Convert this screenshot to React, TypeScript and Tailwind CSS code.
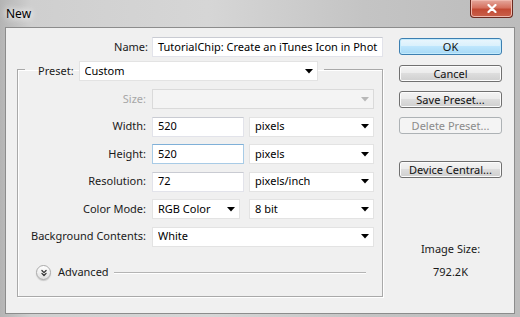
import { ChevronsDown } from "lucide-react";

const font = "font-['Noto_Sans','Open_Sans',sans-serif]";

function Arrow({ disabled }: { disabled?: boolean }) {
  return (
    <svg width="8" height="5" viewBox="0 0 8 5" className="shrink-0">
      <polygon points="0,0 8,0 4,4.5" fill={disabled ? "#b8b8b8" : "#000"} />
    </svg>
  );
}

function Select({
  value,
  width,
  disabled,
}: {
  value?: string;
  width: string;
  disabled?: boolean;
}) {
  return (
    <div
      className={`${width} h-[20px] flex items-center justify-between pl-[5px] pr-[4px] border ${
        disabled
          ? "bg-[#f4f4f4] border-[#dadada]"
          : "bg-white border-[#e3e3e3]"
      }`}
    >
      <span className="truncate">{value}</span>
      <Arrow disabled={disabled} />
    </div>
  );
}

function TextBox({
  value,
  width,
  focused,
}: {
  value: string;
  width: string;
  focused?: boolean;
}) {
  return (
    <div
      className={`${width} h-[20px] flex items-center pl-[5px] bg-white border overflow-hidden whitespace-nowrap ${
        focused
          ? "border-[#a8cbe6] border-t-[#7fb0d8]"
          : "border-[#e2e3ea] border-t-[#c9cbd2]"
      }`}
    >
      {value}
    </div>
  );
}

function Row({
  label,
  children,
  disabled,
}: {
  label: string;
  children: React.ReactNode;
  disabled?: boolean;
}) {
  return (
    <div className="flex items-center h-[20px]">
      <div
        className={`w-[129px] text-right pr-[1px] ${
          disabled ? "text-[#a7a7a7]" : "text-[#1a1a1a]"
        }`}
      >
        {label}
      </div>
      <div className="ml-[5px] flex gap-[5px]">{children}</div>
    </div>
  );
}

function Button({
  label,
  primary,
  disabled,
  className = "",
}: {
  label: string;
  primary?: boolean;
  disabled?: boolean;
  className?: string;
}) {
  let look =
    "border-[#707070] bg-[linear-gradient(#f3f3f3_0%,#ebebeb_48%,#dddddd_50%,#cfcfcf_100%)] shadow-[inset_0_0_0_1px_#fcfcfc] text-[#111]";
  if (primary)
    look =
      "border-[#3c7fb1] bg-[linear-gradient(#eaf6fd_0%,#d9f0fc_48%,#bee6fd_50%,#a7d9f5_100%)] shadow-[inset_0_0_0_1px_#c2eafc] text-[#111]";
  if (disabled)
    look = "border-[#adb2b5] bg-[#f4f4f4] text-[#8b8b8b]";
  return (
    <div
      className={`w-[103px] h-[17px] rounded-[3px] border flex items-center justify-center leading-none ${look} ${className}`}
    >
      {label}
    </div>
  );
}

export default function App() {
  return (
    <div
      className={`${font} text-[11px] w-[520px] h-[317px] overflow-hidden flex flex-col bg-[linear-gradient(90deg,#b4b4b4_0%,#cfcfcf_6%,#d6d6d6_40%,#c4c4c4_70%,#bcbcbc_100%)]`}
    >
      {/* title bar */}
      <div className="h-[28px] flex items-start justify-between">
        <div className="pl-[6px] pt-[5px] text-[12px] text-black [text-shadow:0_0_6px_#fff,0_0_10px_#fff]">
          New
        </div>
        <div className="mr-[7px] w-[43px] h-[18px] rounded-b-[4px] border border-t-0 border-[#6b2a20] bg-[linear-gradient(#e5a89d_0%,#d5715f_45%,#c24a34_55%,#c9614b_100%)] flex items-center justify-center shadow-[inset_0_0_0_1px_#efb8ad]">
          <svg width="10" height="9" viewBox="0 0 10 9">
            <path
              d="M1.5 1 L8.5 8 M8.5 1 L1.5 8"
              stroke="#fff"
              strokeWidth="2.2"
              strokeLinecap="round"
            />
          </svg>
        </div>
      </div>

      {/* client area */}
      <div className="mx-[6px] h-[285px] bg-[#f0f0f0] shadow-[0_0_0_1px_#8c8c8c] flex">
        <div className="w-[377px] pt-[9px]">
          <div className="flex items-center h-[20px]">
            <div className="w-[142px] text-right text-[#1a1a1a]">Name:</div>
            <div className="ml-[4px]">
              <TextBox
                value="TutorialChip: Create an iTunes Icon in Phot"
                width="w-[231px]"
              />
            </div>
          </div>

          <fieldset className="ml-[11px] w-[366px] border border-[#a9a9a9] shadow-[1px_1px_0_#fff,inset_1px_1px_0_#fff] pb-[16px]">
            <legend className="ml-[7px] pl-[13px] pr-[6px] pt-[4px] flex items-center gap-[5px]">
              <span className="text-[#1a1a1a]">Preset:</span>
              <Select value="Custom" width="w-[239px]" />
            </legend>

            <div className="mt-[8px] flex flex-col gap-[7.5px]">
              <Row label="Size:" disabled>
                <Select width="w-[222px]" disabled />
              </Row>
              <Row label="Width:">
                <TextBox value="520" width="w-[92px]" />
                <Select value="pixels" width="w-[125px]" />
              </Row>
              <Row label="Height:">
                <TextBox value="520" width="w-[92px]" focused />
                <Select value="pixels" width="w-[125px]" />
              </Row>
              <Row label="Resolution:">
                <TextBox value="72" width="w-[92px]" />
                <Select value="pixels/inch" width="w-[125px]" />
              </Row>
              <Row label="Color Mode:">
                <Select value="RGB Color" width="w-[88px]" />
                <div className="ml-[4px]">
                  <Select value="8 bit" width="w-[125px]" />
                </div>
              </Row>
              <Row label="Background Contents:">
                <Select value="White" width="w-[222px]" />
              </Row>
            </div>

            <div className="mt-[18.5px] ml-[18px] mr-[16px] flex items-center h-[15px]">
              <div className="w-[15px] h-[15px] rounded-full border border-[#aaaaaa] bg-[linear-gradient(#ffffff,#e0e0e0)] shadow-[0_1px_1px_#c8c8c8] flex items-center justify-center shrink-0">
                <ChevronsDown size={10} strokeWidth={3} color="#333" />
              </div>
              <span className="ml-[7px] text-[#1a1a1a]">Advanced</span>
              <div className="ml-[5px] flex-1 h-[2px] border-t border-[#b4b4b4] border-b border-b-white" />
            </div>
          </fieldset>
        </div>

        <div className="ml-[16px] w-[103px] pt-[10px] flex flex-col">
          <Button label="OK" primary />
          <Button label="Cancel" className="mt-[9.5px]" />
          <Button label="Save Preset..." className="mt-[9.5px]" />
          <Button label="Delete Preset..." disabled className="mt-[9px]" />
          <Button label="Device Central..." className="mt-[27px]" />
          <div className="mt-[63px] text-center leading-[16px] text-[#1a1a1a]">
            Image Size:
          </div>
          <div className="mt-[7px] text-center leading-[16px] text-[#1a1a1a]">
            792.2K
          </div>
        </div>
      </div>
      <div className="h-[4px]" />
    </div>
  );
}
